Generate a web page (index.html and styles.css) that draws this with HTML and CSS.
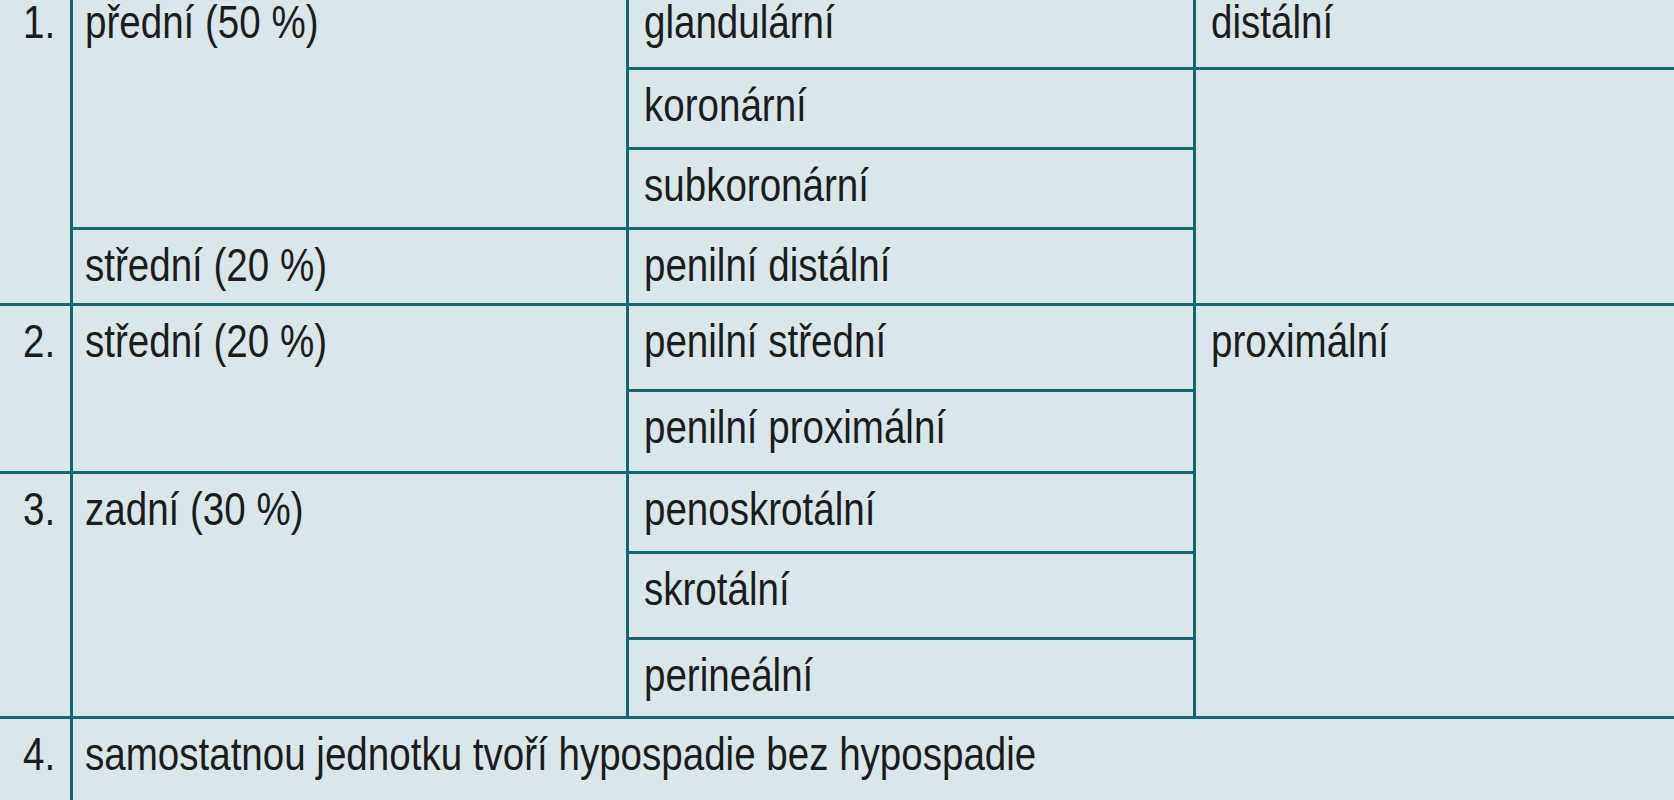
FILE: index.html
```html
<!DOCTYPE html>
<html lang="cs">
<head>
<meta charset="utf-8">
<title>Klasifikace hypospadie</title>
<link rel="stylesheet" href="styles.css">
</head>
<body>
<div class="table">
  <div class="cell num first rows4"><span class="t">1.</span></div>
  <div class="cell col2 first rows3"><span class="t">přední (50 %)</span></div>
  <div class="cell col3 first"><span class="t">glandulární</span></div>
  <div class="cell col4 first"><span class="t">distální</span></div>

  <div class="cell col3"><span class="t">koronární</span></div>
  <div class="cell col4 rows3"></div>

  <div class="cell col3"><span class="t">subkoronární</span></div>

  <div class="cell col2"><span class="t">střední (20 %)</span></div>
  <div class="cell col3"><span class="t">penilní distální</span></div>

  <div class="cell num rows2"><span class="t">2.</span></div>
  <div class="cell col2 rows2"><span class="t">střední (20 %)</span></div>
  <div class="cell col3"><span class="t">penilní střední</span></div>
  <div class="cell col4 rows5"><span class="t">proximální</span></div>

  <div class="cell col3"><span class="t">penilní proximální</span></div>

  <div class="cell num rows3"><span class="t">3.</span></div>
  <div class="cell col2 rows3"><span class="t">zadní (30 %)</span></div>
  <div class="cell col3"><span class="t">penoskrotální</span></div>

  <div class="cell col3"><span class="t">skrotální</span></div>

  <div class="cell col3"><span class="t">perineální</span></div>

  <div class="cell num"><span class="t">4.</span></div>
  <div class="cell col2 wide"><span class="t">samostatnou jednotku tvoří hypospadie bez hypospadie</span></div>
</div>
</body>
</html>
```

FILE: styles.css
```css
html, body {
  margin: 0;
  padding: 0;
  background: #d9e7ea;
  overflow: hidden;
}

.table {
  display: grid;
  grid-template-columns: 70px 553px 564px 1fr;
  grid-template-rows: 67px 77px 77px 73px 83px 79px 77px 83px 76px 82px;
  gap: 3px;
  background: #106870;
  width: 100%;
  font-family: "Liberation Sans", Arial, sans-serif;
  font-size: 47px;
  line-height: 44px;
  color: #1c1c1c;
}

.cell {
  background: #d9e7ea;
  padding-top: 13px;
  white-space: nowrap;
}

.cell.first {
  padding-top: 0;
}

/* Arial Narrow proportions: Arial drawn at 82 % width */
.t {
  display: inline-block;
  transform: scaleX(0.82);
  transform-origin: left top;
}

.num {
  grid-column: 1;
  text-align: right;
  padding-right: 15px;
}

.num .t {
  transform-origin: right top;
}

.col2 { grid-column: 2; padding-left: 12px; }
.col3 { grid-column: 3; padding-left: 15px; }
.col4 { grid-column: 4; padding-left: 15px; }

.wide { grid-column: 2 / span 3; }

.rows2 { grid-row: span 2; }
.rows3 { grid-row: span 3; }
.rows4 { grid-row: span 4; }
.rows5 { grid-row: span 5; }
```
